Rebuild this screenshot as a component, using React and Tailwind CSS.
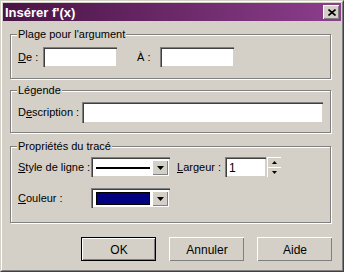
const FONT = { fontFamily: '"Liberation Sans", Arial, sans-serif' };

function Group({ title, className, children }) {
  return (
    <div
      className={`relative ml-[7px] w-[321px] border border-[#808080] shadow-[inset_1px_1px_0_#fff,1px_1px_0_#fff] ${className}`}
    >
      <span className="absolute -top-[8px] left-[6px] bg-[#d4d0c8] px-px text-[11px] leading-[14px] text-black">
        {title}
      </span>
      {children}
    </div>
  );
}

function Field({ className }) {
  return (
    <div
      className={`h-[20px] bg-white border-t border-l border-[#808080] border-r-white border-b-white shadow-[inset_1px_1px_0_#404040,inset_-1px_-1px_0_#d4d0c8] ${className}`}
    />
  );
}

function Arrow() {
  return (
    <div className="w-[16px] h-full bg-[#d4d0c8] border-t border-l border-white border-r-[#404040] border-b-[#404040] shadow-[inset_-1px_-1px_0_#808080] flex items-center justify-center">
      <svg width="7" height="4" viewBox="0 0 7 4">
        <path d="M0 0h7L3.5 4z" fill="#000" />
      </svg>
    </div>
  );
}

function Combo({ children }) {
  return (
    <div className="w-[79px] h-[20px] bg-white border-t border-l border-[#808080] border-r-white border-b-white shadow-[inset_1px_1px_0_#404040,inset_-1px_-1px_0_#d4d0c8] flex p-[2px]">
      <div className="flex-1 flex items-center px-[2px]">{children}</div>
      <Arrow />
    </div>
  );
}

function Btn({ children, primary }) {
  return (
    <div className={`w-[75px] h-[24px] ${primary ? "border border-black" : ""}`}>
      <div className="w-full h-full bg-[#d4d0c8] border-t border-l border-white border-r-[#404040] border-b-[#404040] shadow-[inset_-1px_-1px_0_#808080] flex items-center justify-center text-[12px] text-black">
        {children}
      </div>
    </div>
  );
}

export default function App() {
  return (
    <div style={FONT} className="w-[344px] h-[272px] bg-[#d4d0c8] border border-[#d4d0c8] border-r-[#404040] border-b-[#404040]">
      <div className="w-full h-full border border-white border-r-[#808080] border-b-[#808080] p-px flex flex-col">
        {/* title bar */}
        <div className="h-[18px] bg-gradient-to-r from-[#4a1446] to-[#8d3e8d] flex items-center justify-between pl-[2px] pr-[2px]">
          <span className="text-white font-bold text-[13px] leading-none">Insérer f'(x)</span>
          <div className="w-[16px] h-[14px] bg-[#d4d0c8] border-t border-l border-white border-r-[#404040] border-b-[#404040] shadow-[inset_-1px_-1px_0_#808080] flex items-center justify-center">
            <svg width="8" height="7" viewBox="0 0 8 7">
              <path d="M0.5 0.5l7 6M7.5 0.5l-7 6" stroke="#000" strokeWidth="1.6" />
            </svg>
          </div>
        </div>

        <Group title="Plage pour l'argument" className="mt-[13px] h-[45px]">
          <div className="flex items-center pl-[7px] pt-[12px] text-[11px] text-black">
            <span className="w-[25px]"><u>D</u>e :</span>
            <Field className="w-[74px]" />
            <span className="ml-[20px] w-[23px]">À :</span>
            <Field className="w-[74px]" />
          </div>
        </Group>

        <Group title="Légende" className="mt-[11px] h-[43px]">
          <div className="flex items-center pl-[7px] pt-[11px] text-[11px] text-black">
            <span className="w-[64px]">D<u>e</u>scription :</span>
            <Field className="w-[241px] h-[21px]" />
          </div>
        </Group>

        <Group title="Propriétés du tracé" className="mt-[13px] h-[77px]">
          <div className="pl-[7px] pt-[10px] text-[11px] text-black flex flex-col gap-[11px]">
            <div className="flex items-center">
              <span className="w-[73px]"><u>S</u>tyle de ligne :</span>
              <Combo>
                <div className="w-full h-[2px] bg-black" />
              </Combo>
              <span className="ml-[7px] w-[48px]"><u>L</u>argeur :</span>
              <div className="w-[41px] h-[20px] bg-white border-t border-l border-[#808080] border-r-white border-b-white shadow-[inset_1px_1px_0_#404040,inset_-1px_-1px_0_#d4d0c8] flex items-center pl-[3px] text-[12px]">
                1
              </div>
              <div className="ml-px w-[14px] h-[20px] flex flex-col">
                <div className="h-[10px] bg-[#d4d0c8] border-t border-l border-white border-r-[#404040] border-b-[#404040] flex items-center justify-center">
                  <svg width="5" height="3" viewBox="0 0 5 3"><path d="M2.5 0L5 3H0z" fill="#000" /></svg>
                </div>
                <div className="h-[10px] bg-[#d4d0c8] border-t border-l border-white border-r-[#404040] border-b-[#404040] flex items-center justify-center">
                  <svg width="5" height="3" viewBox="0 0 5 3"><path d="M0 0h5L2.5 3z" fill="#000" /></svg>
                </div>
              </div>
            </div>
            <div className="flex items-center">
              <span className="w-[73px]"><u>C</u>ouleur :</span>
              <Combo>
                <div className="w-full h-[13px] bg-[#000080] border border-black" />
              </Combo>
            </div>
          </div>
        </Group>

        <div className="mt-[14px] flex pl-[78px] gap-[13px]">
          <Btn primary>OK</Btn>
          <Btn>Annuler</Btn>
          <Btn>Aide</Btn>
        </div>
      </div>
    </div>
  );
}
